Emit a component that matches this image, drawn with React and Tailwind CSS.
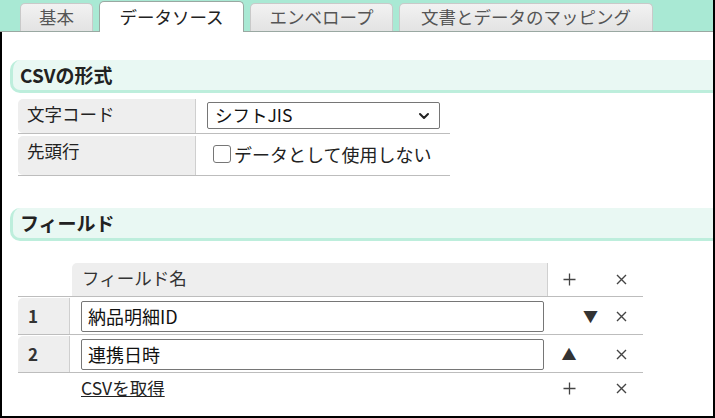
import { ChevronDown } from 'lucide-react';

const tabs = [
  { label: '基本', w: 'w-[73px]' },
  { label: 'データソース', w: 'w-[145px]', active: true },
  { label: 'エンベロープ', w: 'w-[143px]' },
  { label: '文書とデータのマッピング', w: 'w-[254px]' },
];

function SectionTitle({ children }) {
  return (
    <div className="ml-[8px] h-[33px] flex items-center pl-[7px] bg-[#e9f8f3] border-l-[3px] border-b-[3px] border-[#bdeedc] rounded-l-[10px] text-[19px] font-bold text-[#222]">
      {children}
    </div>
  );
}

function Cross() {
  return (
    <svg width="11" height="11" viewBox="0 0 11 11" className="text-[#444]">
      <path d="M1 1L10 10M10 1L1 10" stroke="currentColor" strokeWidth="1.4" />
    </svg>
  );
}

function Plus() {
  return (
    <svg width="13" height="13" viewBox="0 0 13 13" className="text-[#444]">
      <path d="M6.5 0.5V12.5M0.5 6.5H12.5" stroke="currentColor" strokeWidth="1.3" />
    </svg>
  );
}

export default function App() {
  return (
    <div className="w-[715px] h-[418px] bg-white border-r-2 border-black text-[#222] overflow-hidden" style={{ fontFamily: '"Noto Sans CJK JP", "Noto Sans", sans-serif' }}>
      {/* Tabs */}
      <div className="h-[32px] bg-[#a9e9d4] border-b border-[#9aa8a2] flex items-end pl-[20px] gap-[6px]">
        {tabs.map((t) =>
          t.active ? (
            <div key={t.label} className={`${t.w} h-[31px] -mb-px bg-white border border-b-0 border-[#9aa8a2] rounded-t-[5px] flex items-center justify-center text-[17.5px] text-[#222]`}>
              {t.label}
            </div>
          ) : (
            <div key={t.label} className={`${t.w} h-[28px] bg-gradient-to-b from-[#f2f2f2] to-[#e3e3e3] border border-b-0 border-[#c9c9c9] rounded-t-[5px] flex items-center justify-center text-[17.5px] text-[#555]`}>
              {t.label}
            </div>
          )
        )}
      </div>

      <div className="h-[386px] border-l-2 border-b-2 border-black pt-[28px]">
        <SectionTitle>CSVの形式</SectionTitle>

        {/* Format table */}
        <div className="ml-[16px] mt-[6px] w-[432px] text-[17.5px]">
          <div className="flex h-[35px] border-b border-[#bdbdbd]">
            <div className="w-[178px] bg-[#eeeeee] rounded-tl-[5px] rounded-bl-[5px] border-r border-[#cfcfcf] pl-[9px] pt-[2px]">文字コード</div>
            <div className="flex-1 pl-[11px] pt-[3px]">
              <div className="w-[233px] h-[27px] border border-[#767676] rounded-[2px] flex items-center justify-between pl-[7px] pr-[7px] text-[#111]">
                シフトJIS
                <ChevronDown size={16} strokeWidth={3} className="text-[#222]" />
              </div>
            </div>
          </div>
          <div className="flex h-[40px] mt-[2px] border-b border-[#bdbdbd]">
            <div className="w-[178px] bg-[#eeeeee] rounded-tl-[5px] rounded-bl-[5px] border-r border-[#cfcfcf] pl-[9px] pt-[2px]">先頭行</div>
            <div className="flex-1 pl-[17px] pt-[5px] flex items-start gap-[3px] text-[18px]">
              <span className="mt-[4px] w-[18px] h-[18px] border border-[#767676] rounded-[3px] bg-white" />
              データとして使用しない
            </div>
          </div>
        </div>

        <div className="mt-[32px]">
          <SectionTitle>フィールド</SectionTitle>
        </div>

        {/* Fields table */}
        <div className="ml-[16px] mt-[22px] w-[625px] text-[17.5px]">
          <div className="flex h-[34px] border-b border-[#bdbdbd]">
            <div className="w-[54px]" />
            <div className="w-[476px] bg-[#eeeeee] rounded-tl-[5px] border-r border-[#d0d0d0] pl-[10px] pt-[2px] text-[#333]">フィールド名</div>
            <div className="w-[42px] flex items-center justify-center"><Plus /></div>
            <div className="w-[53px] flex items-center pl-[26px]"><Cross /></div>
          </div>
          {[
            { n: 1, v: '納品明細ID', arrow: 'down' },
            { n: 2, v: '連携日時', arrow: 'up' },
          ].map((r) => (
            <div key={r.n} className="flex h-[38px] border-b border-[#bdbdbd] pt-[1px]">
              <div className="w-[52px] bg-[#eeeeee] rounded-tl-[5px] border-r border-[#cfcfcf] flex items-center pl-[10px] font-bold text-[#333] text-[17px]">{r.n}</div>
              <div className="w-[478px] pl-[11px] pr-[4px] flex items-center">
                <div className="w-full h-[31px] border border-[#767676] rounded-[2px] flex items-center pl-[6px] text-[#111] text-[18px]">{r.v}</div>
              </div>
              <div className="w-[42px] flex items-center justify-center">
                {r.arrow === 'up' ? <span className="text-[15px] text-[#333]">▲</span> : null}
              </div>
              <div className="w-[53px] flex items-center pl-[26px] relative">
                {r.arrow === 'down' ? <span className="absolute -left-[7px] text-[15px] text-[#333]">▼</span> : null}
                <Cross />
              </div>
            </div>
          ))}
          <div className="flex h-[31px] items-center">
            <div className="w-[54px]" />
            <div className="w-[476px] pl-[9px]">
              <a href="#" className="underline text-[#222]">CSVを取得</a>
            </div>
            <div className="w-[42px] flex items-center justify-center"><Plus /></div>
            <div className="w-[53px] flex items-center pl-[26px]"><Cross /></div>
          </div>
        </div>
      </div>
    </div>
  );
}
